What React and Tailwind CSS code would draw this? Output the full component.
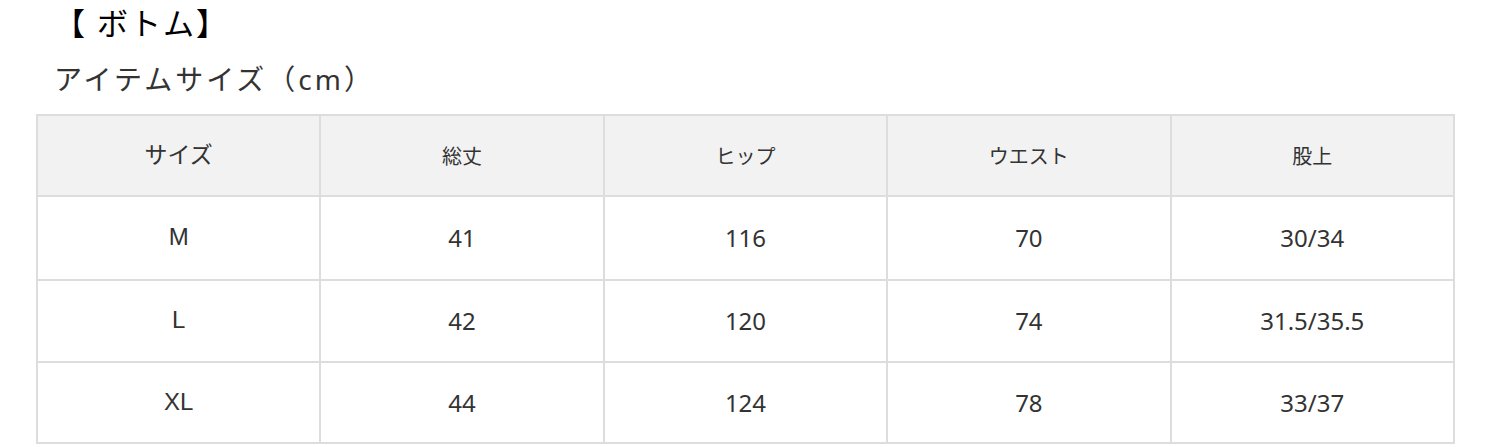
export default function App() {
  const headers = ['総丈', 'ヒップ', 'ウエスト', '股上'];
  const rows = [
    { h: 'h-[84px]', cells: ['M', '41', '116', '70', '30/34'] },
    { h: 'h-[82px]', cells: ['L', '42', '120', '74', '31.5/35.5'] },
    { h: 'h-[81px]', cells: ['XL', '44', '124', '78', '33/37'] },
  ];

  return (
    <div className="w-[1500px] h-[447px] bg-white text-[#333] font-['Noto_Sans','Noto_Sans_CJK_JP',sans-serif]">
      <h2 className="pl-[54px] pt-[1px] text-[31px] leading-[44px] tracking-[2px] text-black font-normal">【 ボトム】</h2>
      <p className="pl-[54px] mt-[14px] text-[28px] leading-[40px] tracking-[3px] text-[#333]">アイテムサイズ（cm）</p>

      <table className="ml-[36px] mt-[15px] w-[1419px] table-fixed border-collapse">
        <thead>
          <tr className="h-[81px] bg-[#f2f2f2]">
            <th className="border-2 border-[#ddd] font-normal text-[23px] pb-[5px] font-['Noto_Sans_CJK_JP',sans-serif]">サイズ</th>
            {headers.map((h) => (
              <th key={h} className="border-2 border-[#ddd] font-normal text-[20px] font-['Noto_Sans_CJK_JP',sans-serif]">
                {h}
              </th>
            ))}
          </tr>
        </thead>
        <tbody>
          {rows.map((r) => (
            <tr key={r.cells[0]} className={r.h}>
              <td className="border-2 border-[#ddd] text-center text-[24px] pb-[2px] font-['Liberation_Sans',sans-serif]">{r.cells[0]}</td>
              {r.cells.slice(1).map((v, i) => (
                <td key={i} className="border-2 border-[#ddd] text-center text-[24px]">
                  {v}
                </td>
              ))}
            </tr>
          ))}
        </tbody>
      </table>
    </div>
  );
}
